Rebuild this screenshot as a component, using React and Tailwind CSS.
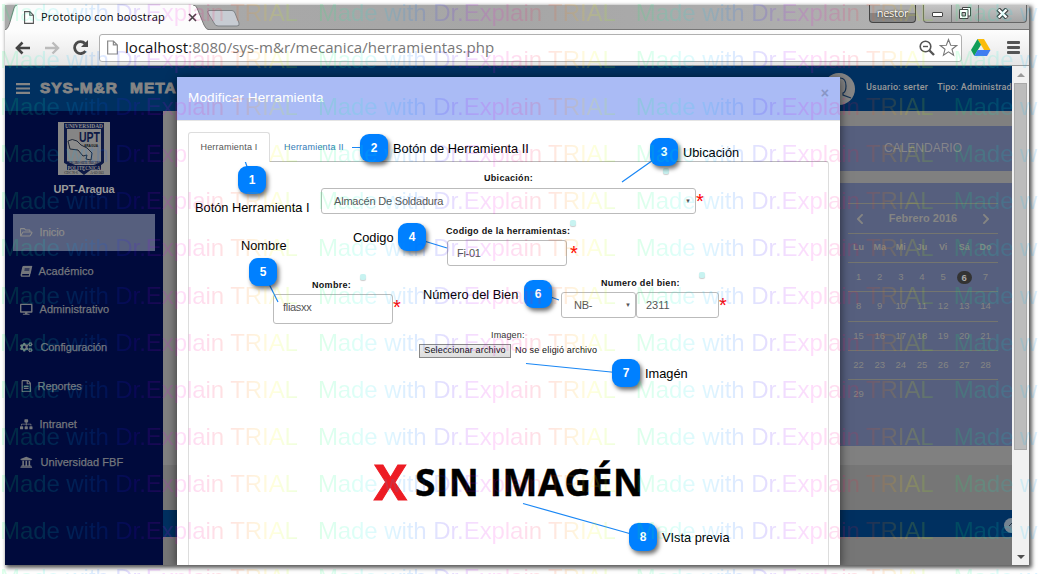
import React from 'react';
import {
  FaBars, FaRegFolderOpen, FaBook, FaDesktop, FaCogs, FaRegFileAlt, FaSitemap,
  FaUniversity, FaChevronLeft, FaChevronRight,
} from 'react-icons/fa';

const menu = [
  { Icon: FaRegFolderOpen, label: 'Inicio', gap: 'gap-[7px]', track: 'tracking-[-0.1px]', active: true },
  { Icon: FaBook, label: 'Académico', gap: 'gap-[6px]', track: 'tracking-[0.1px]', shape: '-skew-x-12 scale-90' },
  { Icon: FaDesktop, label: 'Administrativo', gap: 'gap-[7px]', track: 'tracking-[0.05px]' },
  { Icon: FaCogs, label: 'Configuración', gap: 'gap-[8px]', track: 'tracking-[-0.1px]' },
  { Icon: FaRegFileAlt, label: 'Reportes', gap: 'gap-[5px]', track: 'tracking-[-0.05px]' },
  { Icon: FaSitemap, label: 'Intranet', gap: 'gap-[7px]', track: 'tracking-[0px]' },
  { Icon: FaUniversity, label: 'Universidad FBF', gap: 'gap-[8px]', track: 'tracking-[0.05px]' },
];

const weeks = [
  [1, 2, 3, 4, 5, 6, 7],
  [8, 9, 10, 11, 12, 13, 14],
  [15, 16, 17, 18, 19, 20, 21],
  [22, 23, 24, 25, 26, 27, 28],
  [29],
];

const notes = [
  { n: 1, pos: 'left-[238px] top-[166px]' },
  { n: 2, pos: 'left-[360px] top-[134px]' },
  { n: 3, pos: 'left-[650px] top-[138px]' },
  { n: 4, pos: 'left-[398px] top-[223px]' },
  { n: 5, pos: 'left-[249px] top-[258px]' },
  { n: 6, pos: 'left-[524px] top-[280px]' },
  { n: 7, pos: 'left-[612px] top-[359px]' },
  { n: 8, pos: 'left-[629px] top-[523px]' },
];

const captions = [
  { text: 'Botón Herramienta I', pos: 'left-[195px] top-[200px]' },
  { text: 'Botón de Herramienta II', pos: 'left-[393px] top-[141px]' },
  { text: 'Ubicación', pos: 'left-[683px] top-[145px]' },
  { text: 'Codigo', pos: 'left-[353px] top-[230px]' },
  { text: 'Nombre', pos: 'left-[241px] top-[238px]' },
  { text: 'Número del Bien', pos: 'left-[423px] top-[287px]' },
  { text: 'Imagén', pos: 'left-[645px] top-[366px]' },
  { text: 'VIsta previa', pos: 'left-[662px] top-[530px]' },
];

const hints = ['left-[663px] top-[168px]', 'left-[570px] top-[220px]', 'left-[360px] top-[274px]', 'left-[699px] top-[272px]'];

function PageIcon({ className }) {
  return (
    <svg className={className} viewBox="0 0 10 13" fill="#fff">
      <path d="M.6.6h5.2l3.6 3.6v8.2H.6z M5.8.6v3.6h3.6" stroke="currentColor" strokeWidth="1.1" />
    </svg>
  );
}

function TabStrip() {
  return (
    <div className="relative flex h-[25px] shrink-0 justify-between border-b border-[#777] bg-linear-to-r from-[#aaa] via-[#a6a6a6] to-[#b4b4b4]">
      <svg className="absolute left-0 top-0 h-[25px] w-[240px]" viewBox="0 0 240 25">
        <path d="M0 25C3 24 4 20 5 17L9 3Q10 0 12 0H188Q191 0 192 3L199 20Q201 25 205 25Z" fill="#fcfcfc" />
        <path d="M0 25C3 24 4 20 5 17L9 3Q10 0 12 0M188 0Q191 0 192 3L199 20Q201 25 205 25" fill="none" stroke="#777" />
        <path d="M204 5.5H227Q229 5.5 230 8L234 18Q235 21 232 21H213Q210 21 209 18L203 8Q202 5.500 204 5.500Z" fill="#c7ccd3" stroke="#7f8386" />
      </svg>
      <div className="relative flex items-center pl-[19px] pt-px">
        <PageIcon className="h-[13px] w-[10px] text-[#555]" />
        <span className="ml-[7px] w-[124px] whitespace-nowrap font-['Open_Sans',sans-serif] text-[11px] tracking-[0.22px] text-black">Prototipo con boostrap</span>
        <svg className="ml-[23px] size-[9px]" viewBox="0 0 9 9"><path d="M1 1l7 7M8 1l-7 7" stroke="#444" strokeWidth="1.6" /></svg>
      </div>
      <div className="relative flex h-[18px] gap-[7px] pr-[2px]">
        <div className="flex w-[47px] items-center justify-center rounded-b-[4px] border border-t-0 border-[#444] bg-linear-to-b from-[#aaa] from-45% to-[#858585] to-50% font-['Open_Sans',sans-serif] text-[11px] tracking-[-0.3px] text-white [text-shadow:0_0_2px_#111]">nestor</div>
        <div className="flex w-[104px] overflow-hidden rounded-b-[4px] border border-t-0 border-[#666] bg-linear-to-b from-[#c4c4c4] to-[#a5a5a5]">
          <div className="flex w-[28px] items-center justify-center border-r border-[#777] pt-[2px]"><span className="h-[5px] w-[11px] rounded-[1px] border border-[#444] bg-white" /></div>
          <div className="flex w-[27px] items-center justify-center border-r border-[#777] pb-px">
            <svg className="size-[12px]" viewBox="0 0 12 12"><path d="M3.500 .5h8v8.500h-8z" fill="#fff" stroke="#444" /><path d="M.5 2.500H9v9H.5z" fill="#fff" stroke="#444" /><path d="M3 5.500h3.500v3.500H3z" fill="#bbb" stroke="#444" /></svg>
          </div>
          <div className="flex flex-1 items-center justify-center pb-px">
            <svg className="h-[11px] w-[13px]" viewBox="0 0 13 11"><path d="M2 1l9 9M11 1l-9 9" stroke="#444" strokeWidth="4.600" /><path d="M2.500 1.500l8 8M10.500 1.500l-8 8" stroke="#fff" strokeWidth="2.400" /></svg>
          </div>
        </div>
      </div>
    </div>
  );
}

function Toolbar() {
  return (
    <div className="flex h-[36px] shrink-0 items-center border-b border-[#999] bg-linear-to-b from-[#fdfdfd] to-[#e6e6e6] pl-[10px]">
      <svg className="h-[14px] w-[16px]" viewBox="0 0 16 14"><path d="M15 7H2M7.500 1.500L2 7l5.500 5.500" fill="none" stroke="#444" strokeWidth="2.600" /></svg>
      <svg className="ml-[13px] h-[14px] w-[16px]" viewBox="0 0 16 14"><path d="M1 7H14M8.500 1.500L14 7l-5.500 5.500" fill="none" stroke="#bbb" strokeWidth="2.400" /></svg>
      <svg className="ml-[12px] size-[17px]" viewBox="0 0 17 17"><path d="M13.500 12A6 6 0 1 1 13 4.500" fill="none" stroke="#4a4a4a" strokeWidth="2.800" /><path d="M16 1v7H9z" fill="#4a4a4a" /></svg>
      <div className="ml-[10px] flex h-[28px] w-[863px] items-center rounded-[3px] border border-[#b0b0b0] bg-white pl-[7px] pr-[3px]">
        <PageIcon className="h-[15px] w-[11px] text-[#888]" />
        <span className="ml-[7px] flex-1 whitespace-nowrap font-['Open_Sans',sans-serif] text-[15px] tracking-[0.04px] text-[#777]"><span className="text-[#111]">localhost</span>:8080/sys-m&amp;r/mecanica/herramientas.php</span>
        <svg className="size-[16px]" viewBox="0 0 16 16"><circle cx="6.500" cy="6.500" r="5.300" fill="none" stroke="#555" strokeWidth="1.600" /><path d="M4 6.500h5" stroke="#555" strokeWidth="1.400" /><path d="M10.500 10.500l4.500 4.500" stroke="#555" strokeWidth="2.400" /></svg>
        <svg className="ml-[4px] size-[19px]" viewBox="0 0 19 19"><path d="M9.500 1.500l2.200 5.700 6 .3-4.700 3.800 1.600 5.900-5.100-3.300-5.100 3.300L6 11.300 1.300 7.500l6-.3z" fill="#fff" stroke="#777" strokeWidth="1.100" /></svg>
      </div>
      <svg className="ml-[9px] h-[17px] w-[20px]" viewBox="0 0 20 17"><path d="M6.500 0h6.500l6.500 11H13z" fill="#fbbc0b" /><path d="M6.500 0L0 11l3.300 6L10 5.800z" fill="#109d58" /><path d="M6.500 11h13L16 17H3.300z" fill="#3f7df0" /></svg>
      <div className="ml-[16px] flex w-[13px] flex-col gap-[2px]">
        <span className="h-[3px] rounded-[1px] bg-[#555]" /><span className="h-[3px] rounded-[1px] bg-[#555]" /><span className="h-[3px] rounded-[1px] bg-[#555]" />
      </div>
    </div>
  );
}

function Crest() {
  return (
    <svg className="h-[53px] w-[52px]" viewBox="0 0 52 53">
      <path d="M0 0h52v53H0z" fill="#858585" />
      <path d="M7.500 7V40Q12 43 18 45L26 51 34 45Q42 43 44.500 40V7" fill="none" stroke="#0d1946" strokeWidth="3" />
      <path d="M6 1h40v6H6z" fill="#0d1946" />
      <text x="26" y="6" textAnchor="middle" textLength="38" lengthAdjust="spacingAndGlyphs" className="fill-[#909090] font-['Liberation_Serif',serif] text-[6px] font-bold">UNIVERSIDAD</text>
      <text x="31.500" y="20" textAnchor="middle" textLength="21" lengthAdjust="spacingAndGlyphs" className="fill-[#0d1946] font-['Liberation_Sans',sans-serif] text-[15px] font-bold">UPT</text>
      <text x="33" y="25" textAnchor="middle" textLength="14" lengthAdjust="spacingAndGlyphs" className="fill-[#111] font-['Liberation_Sans',sans-serif] text-[4px] font-bold">ARAGUA</text>
      <path d="M10 19q4-3 9 0l4 4 6 3 5 5-1 7-5-1 1-4-4 1-5-6-8-1z" fill="#8c8c8c" stroke="#202838" />
      <text x="26" y="42" textAnchor="middle" textLength="33" lengthAdjust="spacingAndGlyphs" className="fill-[#0d1946] font-['Liberation_Serif',serif] text-[4px] font-bold">TERCERO SIETE TRECERO</text>
      <path d="M9 43h34v5H9z" fill="#0d1946" />
      <text x="26" y="48" textAnchor="middle" textLength="33" lengthAdjust="spacingAndGlyphs" className="fill-[#909090] font-['Liberation_Serif',serif] text-[6px] font-bold">POLITECNICA</text>
      <text x="13" y="52" textAnchor="middle" className="fill-[#222] font-['Liberation_Serif',serif] text-[3.500px]">CDC Nº6</text>
      <text x="39" y="52" textAnchor="middle" className="fill-[#222] font-['Liberation_Serif',serif] text-[3.500px]">A-03-203</text>
    </svg>
  );
}

function Sidebar() {
  return (
    <aside className="flex w-[158px] shrink-0 flex-col items-center bg-[#000a3c] pt-[11px]">
      <Crest />
      <div className="mt-[7px] h-[14px] text-[11px] font-bold leading-[14px] tracking-[-0.2px] text-[#999]">UPT-Aragua</div>
      <nav className="mt-[18px] flex w-[142px] flex-col">
        {menu.map(({ Icon, label, gap, track, active, shape = '' }) => (
          <div key={label} className={active ? 'flex h-[37px] items-center bg-[#565f7e] pl-[7px] text-[#8a8a8a]' : 'flex h-[38.300px] items-center pl-[7px] pt-[2px] text-[#74777c]'}>
            <span className={`flex items-center ${gap}`}>
              <Icon className={`size-[12.500px] ${shape}`} />
              <span className={`whitespace-nowrap text-[11px] [-webkit-text-stroke:0.25px_currentColor] ${track}`}>{label}</span>
            </span>
          </div>
        ))}
      </nav>
    </aside>
  );
}

function Calendar() {
  return (
    <div className="mt-[12px] h-[263px] bg-[#565f7e] px-[8px] pt-[20px] text-[#858583]">
      <div className="flex h-[30px] w-[150px] items-center justify-between border-t border-[#74756f] px-[6px]">
        <FaChevronLeft className="size-[12px]" />
        <span className="text-[11px] font-bold">Febrero 2016</span>
        <FaChevronRight className="size-[12px]" />
      </div>
      <div className="grid h-[29px] w-[150px] grid-cols-7 items-center border-t border-[#74756f] pr-[2px] text-center text-[9px] font-bold">
        {['Lu', 'Ma', 'Mi', 'Ju', 'Vi', 'Sá', 'Do'].map((d) => <span key={d}>{d}</span>)}
      </div>
      {weeks.map((w) => (
        <div key={w[0]} className="grid h-[29.300px] w-[150px] grid-cols-7 items-center border-t border-[#74756f] pr-[2px] text-center text-[9.500px]">
          {w.map((d) => (
            <span key={d} className={d === 6 ? 'mx-auto h-[13px] w-[15px] rounded-full bg-[#333] font-bold leading-[13px] text-[#aaa]' : ''}>{d}</span>
          ))}
        </div>
      ))}
    </div>
  );
}

function Page() {
  return (
    <div className="flex min-w-0 flex-1 flex-col overflow-hidden">
      <header className="flex h-[45px] shrink-0 items-center bg-[#003060] pl-[11px] text-[#858585]">
        <svg className="h-[11px] w-[14px] shrink-0" viewBox="0 0 14 11"><path d="M0 1.200h14M0 5.500h14M0 9.800h14" stroke="currentColor" strokeWidth="2.200" /></svg>
        <span className="ml-[10px] w-[90px] shrink-0 whitespace-nowrap pb-px text-[15.500px] font-black tracking-[0.9px] [-webkit-text-stroke:0.9px_#858585]">SYS-M&amp;R</span>
        <span className="w-[693px] shrink-0 whitespace-nowrap pb-px text-[15.500px] font-black tracking-[1px] [-webkit-text-stroke:0.9px_#858585]">METALMECANICA</span>
        <svg className="size-[32px] shrink-0" viewBox="0 0 32 32"><circle cx="16" cy="16" r="16" fill="#858585" /><path d="M11 13q0-8 6-8t6 8q0 6-3 7v2l8 3M8 26l5-4v-2q-2-2-2-7" fill="#858585" stroke="#163457" strokeWidth="1.200" /></svg>
        <span className="ml-[11px] flex shrink-0 gap-[9px] whitespace-nowrap pb-[2px] font-[Roboto,sans-serif] text-[9px] font-medium tracking-[0.18px] text-[#999]"><span>Usuario: serter</span><span>Tipo: Administrador</span></span>
      </header>
      <div className="flex min-h-0 flex-1">
        <Sidebar />
        <main className="flex min-w-0 flex-1 flex-col bg-[#808080]">
          <div className="ml-auto h-[354px] w-[172px] shrink-0 pt-[15px]">
            <div className="flex h-[45px] items-center justify-center bg-[#565f7e] pb-[2px] pr-[6px] text-[12px] text-[#85858a]">CALENDARIO</div>
            <Calendar />
          </div>
          <div className="h-[45px] shrink-0 bg-[#767676]" />
          <footer className="flex h-[27px] shrink-0 items-center justify-end overflow-hidden bg-[#003060] pt-[3px]">
            <svg className="-mr-[7px] size-[15px]" viewBox="0 0 15 15"><circle cx="7.500" cy="7.500" r="7.500" fill="#748391" /><path d="M5 8l3-3 3 3" fill="none" stroke="#234" /></svg>
          </footer>
          <div className="flex-1 bg-[#767676]" />
        </main>
      </div>
    </div>
  );
}

function Star() {
  return <span className="h-[16px] w-[9px] text-[20px] leading-[26px] text-[#f00]">*</span>;
}

function Modal() {
  return (
    <section className="absolute left-[172px] top-[11px] flex h-[488px] w-[663px] flex-col bg-white shadow-[0_2px_10px_rgba(0,0,0,0.6)]">
      <header className="flex h-[44px] shrink-0 items-center justify-between border-b border-[#e5e5e5] bg-[#aabbf5] pl-[11px] pr-[11px]">
        <h1 className="whitespace-nowrap pb-px text-[13.500px] tracking-[0.13px] text-white">Modificar Herramienta</h1>
        <span className="pb-[10px] text-[14px] font-bold text-[#8896c5]">×</span>
      </header>
      <div className="flex flex-1 flex-col px-[11px] pt-[11px]">
        <div className="flex h-[29px] text-[9px]">
          <div className="relative z-10 -mb-px flex w-[82px] items-center justify-center whitespace-nowrap rounded-t-[3px] border border-b-0 border-[#ddd] bg-white tracking-[0.2px] text-[#555]">Herramienta I</div>
          <div className="flex items-center whitespace-nowrap pl-[14px] pt-[2px] tracking-[0.2px] text-[#337ab7]">Herramienta II</div>
        </div>
        <div className="flex flex-1 flex-col rounded-tr-[3px] border border-b-0 border-[#ddd] border-t-[#bbb] text-[#555]">
          <div className="flex h-[26px] items-center pl-[295px] pt-[8px] text-[9px] font-bold tracking-[0.3px] text-[#111]">Ubicación:</div>
          <div className="flex pl-[132px]">
            <div className="flex h-[26px] w-[375px] items-center justify-between rounded-[3px] border border-[#bbb] pl-[12px] pr-[4px] text-[11px]"><span className="tracking-[-0.2px]">Almacén De Soldadura</span><span className="text-[6px]">▼</span></div>
            <Star />
          </div>
          <div className="flex h-[26px] items-center pl-[257px] pt-[9px] text-[9px] font-bold tracking-[0.32px] text-[#111]">Codigo de la herramientas:</div>
          <div className="flex gap-[3px] pl-[258px]">
            <div className="flex h-[26px] w-[120px] items-center rounded-[3px] border border-[#bbb] pl-[9px] text-[11px] tracking-[-0.3px]">Fi-01</div>
            <Star />
          </div>
          <div className="flex h-[58px]">
            <div className="ml-[84px] mt-[12px] flex w-[288px] flex-col">
              <div className="flex h-[16px] items-center pl-[39px] text-[9px] font-bold tracking-[0.3px] text-[#111]">Nombre:</div>
              <div className="flex">
                <div className="flex h-[30px] w-[120px] items-center rounded-[3px] border border-[#bbb] pb-[3px] pl-[9px] text-[11px] tracking-[-0.3px]">fliasxx</div>
                <Star />
              </div>
            </div>
            <div className="mt-[10px] flex flex-col">
              <div className="flex h-[16px] items-center pl-[40px] text-[9px] font-bold tracking-[0.33px] text-[#111]">Numero del bien:</div>
              <div className="flex">
                <div className="flex h-[26px] w-[75px] items-center justify-between rounded-[3px] border border-[#bbb] pl-[12px] pr-[4px] text-[11px]"><span className="tracking-[-0.3px]">NB-</span><span className="text-[6px]">▼</span></div>
                <div className="flex h-[26px] w-[83px] items-center rounded-[3px] border border-[#bbb] pl-[9px] text-[11px]">2311</div>
                <Star />
              </div>
            </div>
          </div>
          <div className="flex h-[20px] items-end pb-[3px] pl-[302px] text-[9px] leading-[12px] tracking-[0.15px] text-[#333]">Imagen:</div>
          <div className="flex items-center gap-[4px] pl-[230px] text-[9px] text-[#111]">
            <span className="flex h-[14px] w-[92px] items-center justify-center whitespace-nowrap border border-[#888] bg-linear-to-b from-[#eee] to-[#ddd] tracking-[0.15px]">Seleccionar archivo</span>
            <span className="whitespace-nowrap tracking-[0.18px]">No se eligió archivo</span>
          </div>
          <div className="mt-[91px] flex h-[64px] items-center pl-[185px] font-['Open_Sans',sans-serif] font-bold leading-none">
            <span className="w-[41px] text-[49px] text-[#ed1c24] [-webkit-text-stroke:1px_#ed1c24]">X</span>
            <span className="whitespace-nowrap text-[37px] tracking-[0.6px] text-black [-webkit-text-stroke:0.4px_#000]">SIN IMAGÉN</span>
          </div>
        </div>
      </div>
    </section>
  );
}

function Scrollbar() {
  return (
    <div className="flex w-[17px] shrink-0 flex-col items-center bg-[#f1f1f1] pb-[6px] pt-[7px]">
      <svg className="h-[4px] w-[8px] shrink-0" viewBox="0 0 8 4"><path d="M4 0l4 4H0z" fill="#999" /></svg>
      <div className="mt-[6px] h-[367px] w-[13px] shrink-0 border border-[#a8a8a8] bg-[#bcbcbc]" />
      <svg className="mt-auto h-[4px] w-[8px] shrink-0" viewBox="0 0 8 4"><path d="M0 0h8L4 4z" fill="#505050" /></svg>
    </div>
  );
}

function Annotations() {
  return (
    <div className="absolute inset-0">
      <svg className="absolute inset-0 h-[574px] w-[1038px]" viewBox="0 0 1038 574">
        <path d="M244 158l7 20M352 147.500h12M622 182l34-24M424 241l23 7M268 282l10 20M548 296l11 4M526 363.500l90 9M523 503.500l110 31" fill="none" stroke="#1a87f5" strokeWidth="1.200" />
      </svg>
      {hints.map((p) => <span key={p} className={`absolute size-[6px] rounded-[2px] bg-[#c8f3f1] shadow-[0_1px_1px_rgba(0,0,0,0.2)] ${p}`} />)}
      {captions.map(({ text, pos }) => <span key={text} className={`absolute whitespace-nowrap text-[12.800px] leading-[15px] text-black ${pos}`}>{text}</span>)}
      {notes.map(({ n, pos }) => <span key={n} className={`absolute flex size-[28px] items-center justify-center rounded-[9px] bg-[#0080ff] text-[12px] font-bold text-white shadow-[2px_3px_4px_rgba(0,0,0,0.55)] ${pos}`}>{n}</span>)}
    </div>
  );
}

function Watermark() {
  return (
    <div className="pointer-events-none absolute left-0 top-0 flex h-[574px] w-[1300px] flex-col overflow-hidden pt-px opacity-[0.13]">
      {Array.from({ length: 13 }, (_, r) => (
        <div key={r} className="flex h-[47.100px] shrink-0">
          {Array.from({ length: 4 }, (_, c) => (
            <span key={c} className="w-[317.900px] shrink-0 whitespace-nowrap bg-linear-[90deg,#00ff60_0%,#00ffc8_12%,#00c8ff_21%,#0060ff_32%,#4000ff_42%,#b000ff_48%,#ff00e0_56%,#ff0080_64%,#ff2020_71%,#ff8000_78%,#ffff00_86%,#80ff00_94%,#00ff40_100%] bg-clip-text text-[24px] leading-[24px] tracking-[-0.07px] text-transparent">Made with Dr.Explain TRIAL</span>
          ))}
        </div>
      ))}
    </div>
  );
}

export default function App() {
  return (
    <div className="relative h-[574px] w-[1038px] overflow-hidden bg-white p-[5px] font-['Liberation_Sans',Arial,sans-serif]">
      <div className="flex h-[560px] w-[1024px] flex-col overflow-hidden bg-white shadow-[2px_2px_4px_1px_rgba(0,0,0,0.65)]">
        <TabStrip />
        <Toolbar />
        <div className="relative flex min-h-0 flex-1 overflow-hidden">
          <Page />
          <Scrollbar />
          <Modal />
        </div>
      </div>
      <Annotations />
      <Watermark />
    </div>
  );
}
